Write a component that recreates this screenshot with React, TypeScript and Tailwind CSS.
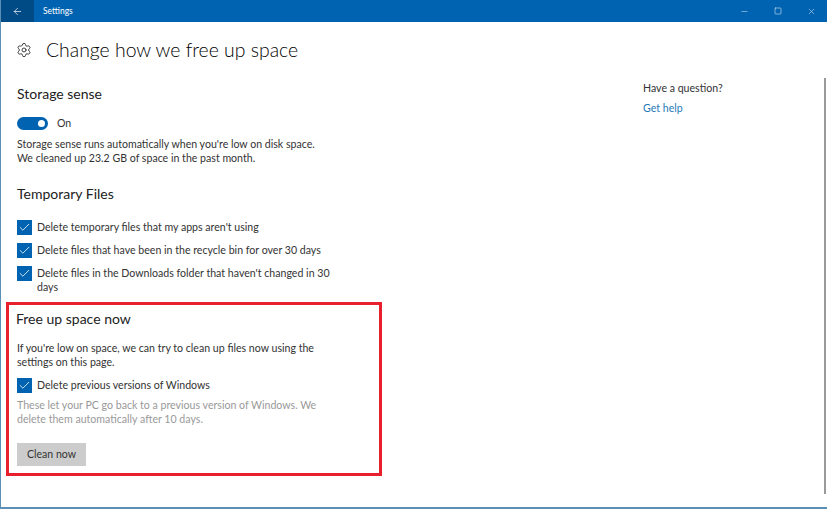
import { ArrowLeft, Check, Minus, Settings, Square, X } from 'lucide-react';

const CheckRow = ({ label }: { label: string }) => (
  <div className="flex items-start gap-[5px]">
    <div className="flex h-[15px] w-[15px] shrink-0 items-center justify-center bg-[#0063b1]">
      <Check className="h-[13px] w-[13px] text-white" strokeWidth={1.5} />
    </div>
    <p className="w-[300px] text-[10.6px] leading-[14px] text-[#333]">{label}</p>
  </div>
);

export default function App() {
  return (
    <div className='flex h-[509px] w-[827px] flex-col overflow-hidden border-b-2 border-l border-[#5b8fb5] bg-white font-["Lato","Liberation_Sans",sans-serif]'>
      <div className="flex h-[22px] shrink-0 items-center bg-[#0063b1] text-white">
        <div className="flex h-full w-[33px] items-center justify-center bg-[#004a85]">
          <ArrowLeft className="h-[11px] w-[11px]" strokeWidth={1.5} />
        </div>
        <span className="ml-[9px] text-[8.5px]">Settings</span>
        <div className="ml-auto flex items-center gap-[25px] pr-[11px]">
          <Minus className="h-[9px] w-[9px]" strokeWidth={1.2} />
          <Square className="h-[8px] w-[8px]" strokeWidth={1.5} />
          <X className="h-[9px] w-[9px]" strokeWidth={1.2} />
        </div>
      </div>

      <div className="flex flex-1">
        <div className="w-[626px] pl-[5px]">
          <div className="ml-[10px] mt-[15px] flex h-[26px] items-center">
            <Settings className="h-[16px] w-[16px] text-[#333]" strokeWidth={1.4} />
            <h1 className="ml-[14px] text-[19.4px] font-light leading-[26px] text-black">Change how we free up space</h1>
          </div>

          <div className="ml-[11px] mt-[21px]">
            <h2 className="text-[14px] leading-[20px] text-[#222]">Storage sense</h2>
            <div className="mt-[11px] flex h-[16px] items-center">
              <div className="flex h-[13px] w-[31px] items-center justify-end rounded-full bg-[#0063b1] pr-[3px]">
                <div className="h-[7px] w-[7px] rounded-full bg-white" />
              </div>
              <span className="ml-[9px] mt-[2px] text-[10.6px] text-[#333]">On</span>
            </div>
            <p className="mt-[6px] text-[10.6px] leading-[14px] text-[#333]">
              Storage sense runs automatically when you're low on disk space.
              <br />
              We cleaned up 23.2 GB of space in the past month.
            </p>

            <h2 className="mt-[19px] text-[14px] leading-[20px] text-[#222]">Temporary Files</h2>
            <div className="mt-[16px] flex flex-col gap-[8px]">
              <CheckRow label="Delete temporary files that my apps aren't using" />
              <CheckRow label="Delete files that have been in the recycle bin for over 30 days" />
              <CheckRow label="Delete files in the Downloads folder that haven't changed in 30 days" />
            </div>
          </div>

          <div className="mt-[8px] h-[174px] w-[376px] border-[3px] border-[#e8202e] pl-[8px] pt-[4px]">
            <h2 className="-ml-[1px] text-[14px] leading-[20px] text-[#222]">Free up space now</h2>
            <p className="mt-[12px] w-[320px] text-[10.6px] leading-[14px] text-[#333]">
              If you're low on space, we can try to clean up files now using the settings on this page.
            </p>
            <div className="mt-[9px]">
              <CheckRow label="Delete previous versions of Windows" />
            </div>
            <p className="mt-[5px] w-[320px] text-[10.6px] leading-[14px] text-[#999]">
              These let your PC go back to a previous version of Windows. We delete them automatically after 10 days.
            </p>
            <button className="mt-[17px] h-[23px] w-[69px] bg-[#cccccc] text-[10.6px] text-[#333]">Clean now</button>
          </div>
        </div>

        <div className="pl-[16px] pt-[59px]">
          <p className="text-[10.6px] leading-[14px] text-[#333]">Have a question?</p>
          <p className="mt-[6px] text-[10.6px] leading-[14px] text-[#1f7ab8]">Get help</p>
        </div>

        <div className="ml-auto mr-[1px] mt-[56px] h-[416px] w-[2px] bg-[#9a9a9a]" />
      </div>
    </div>
  );
}
